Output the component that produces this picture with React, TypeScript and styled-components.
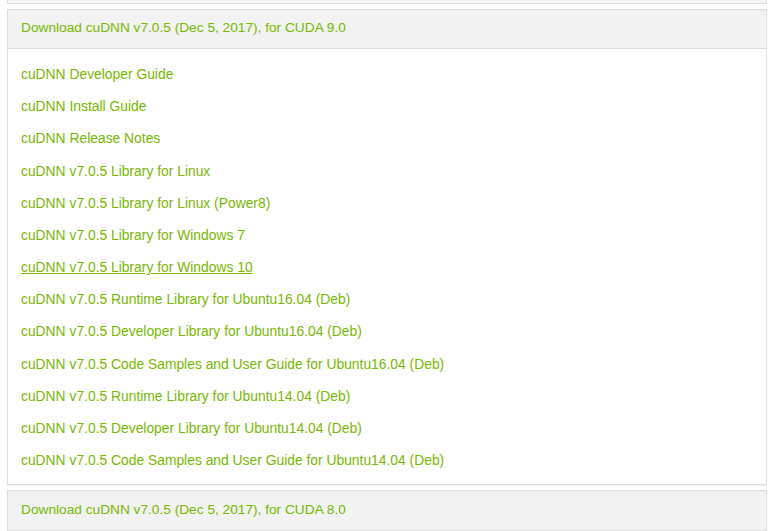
import React from "react";
import styled, { createGlobalStyle } from "styled-components";

const Global = createGlobalStyle`
  html, body { margin: 0; padding: 0; background: #fff; }
  body { font-family: "Liberation Sans", Arial, sans-serif; }
`;

const Page = styled.div`
  padding: 0 6px 0 7px;
  display: flex;
  flex-direction: column;
  gap: 5px;
`;

const PanelTail = styled.div`
  height: 3px;
  background: #f5f5f5;
  border: 1px solid #dddddd;
  border-top: none;
`;

const Panel = styled.section`
  border: 1px solid #dddddd;
  background: #fff;
  box-shadow: 0 1px 1px rgba(0, 0, 0, 0.05);
`;

const Header = styled.div<{ $last?: boolean }>`
  background: #f2f2f2;
  height: 39px;
  box-sizing: border-box;
  display: flex;
  align-items: center;
  padding: 0 13px 3px;
  border-bottom: ${(p) => (p.$last ? "none" : "1px solid #dddddd")};
`;

const HeaderLink = styled.a`
  color: #76b900;
  font-size: 13.7px;
  text-decoration: none;
`;

const Body = styled.div`
  padding: 9px 13px 8px;
  display: flex;
  flex-direction: column;
`;

const Item = styled.a<{ $hover?: boolean }>`
  color: #76b900;
  font-size: 13.85px;
  line-height: 32.17px;
  text-decoration: ${(p) => (p.$hover ? "underline" : "none")};
  align-self: flex-start;
`;

const items = [
  "cuDNN Developer Guide",
  "cuDNN Install Guide",
  "cuDNN Release Notes",
  "cuDNN v7.0.5 Library for Linux",
  "cuDNN v7.0.5 Library for Linux (Power8)",
  "cuDNN v7.0.5 Library for Windows 7",
  "cuDNN v7.0.5 Library for Windows 10",
  "cuDNN v7.0.5 Runtime Library for Ubuntu16.04 (Deb)",
  "cuDNN v7.0.5 Developer Library for Ubuntu16.04 (Deb)",
  "cuDNN v7.0.5 Code Samples and User Guide for Ubuntu16.04 (Deb)",
  "cuDNN v7.0.5 Runtime Library for Ubuntu14.04 (Deb)",
  "cuDNN v7.0.5 Developer Library for Ubuntu14.04 (Deb)",
  "cuDNN v7.0.5 Code Samples and User Guide for Ubuntu14.04 (Deb)",
];

export default function App() {
  return (
    <>
      <Global />
      <Page>
        <PanelTail />
        <Panel>
          <Header>
            <HeaderLink href="#">Download cuDNN v7.0.5 (Dec 5, 2017), for CUDA 9.0</HeaderLink>
          </Header>
          <Body>
            {items.map((t) => (
              <Item key={t} href="#" $hover={t.endsWith("Windows 10")}>
                {t}
              </Item>
            ))}
          </Body>
        </Panel>
        <Panel>
          <Header $last>
            <HeaderLink href="#">Download cuDNN v7.0.5 (Dec 5, 2017), for CUDA 8.0</HeaderLink>
          </Header>
        </Panel>
      </Page>
    </>
  );
}
